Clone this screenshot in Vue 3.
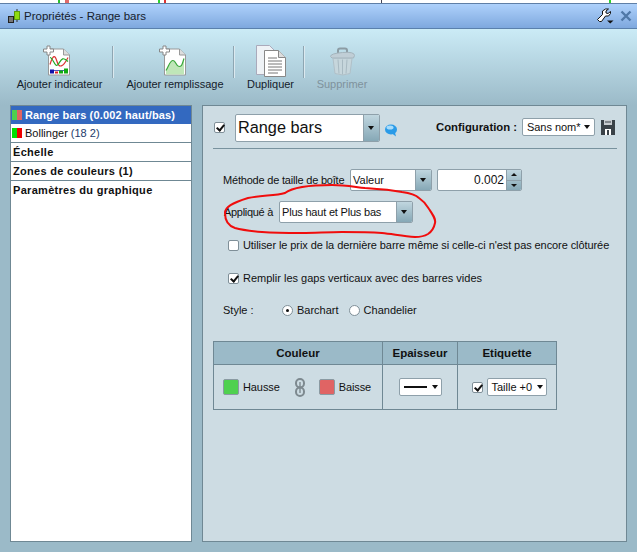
<script setup>
const items = [
  { name: 'add1', label: 'Ajouter indicateur', w: 85 },
  { name: 'add2', label: 'Ajouter remplissage', w: 96 },
  { name: 'dup', label: 'Dupliquer', w: 45 },
  { name: 'del', label: 'Supprimer', w: 48, off: true },
]
</script>

<template>
  <div class="page">
    <div class="topstrip">
      <i class="mark m1"></i><i class="mark m2"></i><i class="mark m3"></i><i class="mark m4"></i><i class="mark m5"></i><i class="mark m6"></i>
    </div>
    <header class="titlebar">
      <svg class="appicon" width="17" height="15" viewBox="0 0 17 15">
        <path d="M7 8v6M13 0v13" stroke="#333" fill="none"/>
        <rect x="4.500" y="7.500" width="5" height="6" fill="#777" stroke="#222"/>
        <rect x="10.500" y="2.500" width="5" height="8" fill="#8fdc10" stroke="#5a9a10"/>
      </svg>
      <span class="title">Propriétés - Range bars</span>
      <svg class="wrench" width="18" height="16" viewBox="0 0 18 16">
        <path d="M3.500 13.500 L1.500 11.500 L6.500 6.500 L6.500 3 L9.500 1 L12.500 1 L10 3 L10 5 L12 5.500 L14.500 3.500 L14.500 5.500 L12.500 8 L9.500 8 L5.500 13.500 Z" fill="#fff" stroke="#111"/>
        <path d="M11 12.500h6.500l-3.250 3z" fill="#111"/>
      </svg>
      <svg class="close" width="12" height="12" viewBox="0 0 12 12">
        <path d="M1.500 1.500l9 9M10.500 1.500l-9 9" stroke="#4f78a8" stroke-width="2.400"/>
      </svg>
    </header>

    <nav class="toolbar">
      <template v-for="(it, i) in items" :key="it.name">
        <span v-if="i" class="sep"></span>
        <button class="tool" :class="[it.name, { off: it.off }]" :style="{ width: it.w + 'px' }">
          <svg v-if="it.name === 'add1'" width="28" height="31" viewBox="0 0 28 31">
            <path d="M5.500 3.500h15l6 6v20h-21z" fill="#fff" stroke="#999"/>
            <path d="M20.500 3.500v6h6" fill="#ddd" stroke="#999"/>
            <path d="M7 19c3-10 5-10 7-3s6 6 11-4" fill="none" stroke="#d33" stroke-width="1.200"/>
            <path d="M7 12c3 0 5 11 8 7s4-9 10-3" fill="none" stroke="#2a2" stroke-width="1.200"/>
            <path d="M7 25h18" stroke="#55b"/>
            <path d="M7 24h4v4H7z" fill="#11a"/><path d="M12 26h3v2h-3z" fill="#d22"/><path d="M16 25h4v3h-4z" fill="#1a1"/><path d="M21 23h4v5h-4z" fill="#1a1"/>
            <path d="M4 .500h3v3h3.500v3H7v3H4v-3H.500v-3H4z" fill="#fff" stroke="#888"/>
          </svg>
          <svg v-else-if="it.name === 'add2'" width="28" height="31" viewBox="0 0 28 31">
            <path d="M5.500 3.500h15l6 6v20h-21z" fill="#fff" stroke="#999"/>
            <path d="M20.500 3.500v6h6" fill="#ddd" stroke="#999"/>
            <path d="M7 25c3-5 4-10 7-10s3 6 6 6 3-2 5-8v16H7z" fill="#bfe6b8"/>
            <path d="M7 25c3-5 4-10 7-10s3 6 6 6 3-2 5-8" fill="none" stroke="#3aa83a" stroke-width="1.200"/>
            <path d="M4 .500h3v3h3.500v3H7v3H4v-3H.500v-3H4z" fill="#fff" stroke="#888"/>
          </svg>
          <svg v-else-if="it.name === 'dup'" width="30" height="32" viewBox="0 0 30 32">
            <path d="M.500.500h13l6 6v23H.500z" fill="#eef2f6" stroke="#aab"/>
            <path d="M8.500 5.500h14l7 7v19h-21z" fill="#fff" stroke="#888"/>
            <path d="M22.500 5.500v7h7" fill="#ddd" stroke="#888"/>
            <path d="M12 13h9M12 16h14M12 19h14M12 22h14M12 25h14M12 28h10" stroke="#777"/>
          </svg>
          <svg v-else width="25" height="29" viewBox="0 0 25 29">
            <path d="M8 6V3q0-2 2-2h5q2 0 2 2v3" fill="none" stroke="#8c9ca4" stroke-width="2"/>
            <path d="M.500 9q0-3 12-4t12 3l-1 2.500H2z" fill="#c0ced6" stroke="#a4b4bc"/>
            <path d="M3 11h19l-2 15q-7 3-15 0z" fill="#c6d6dc" stroke="#b0c0c8"/>
            <path d="M8 12l1 14M12.500 12v15M17 12l-1 14" stroke="#a8bac2"/>
          </svg>
          <span class="toollabel">{{ it.label }}</span>
        </button>
      </template>
    </nav>

    <main class="body">
      <aside class="tree">
        <div class="row sel"><i class="sw"><b class="g2"></b><b class="r2"></b></i>Range bars (0.002 haut/bas)</div>
        <div class="row ind"><i class="sw"><b class="g1"></b><b class="r1"></b></i>Bollinger <span class="param">(18 2)</span></div>
        <div class="row bold">Échelle</div>
        <div class="row bold">Zones de couleurs (1)</div>
        <div class="row bold last">Paramètres du graphique</div>
      </aside>

      <section class="panel">
        <div class="head">
          <span class="check on cb-head"></span>
          <div class="combo big"><span class="val">Range bars</span><span class="drop"></span></div>
          <svg class="bubble" width="14" height="13" viewBox="0 0 14 13">
            <ellipse cx="7" cy="5.500" rx="6" ry="5" fill="#2a9be8"/>
            <ellipse cx="6" cy="3.500" rx="3.500" ry="2" fill="#a8dcfa"/>
            <path d="M8 9.500l4 3-1-4z" fill="#2a9be8"/>
          </svg>
          <span class="spacer"></span>
          <span class="cfg">Configuration :</span>
          <div class="pill cfgsel">Sans nom*<i class="tri"></i></div>
          <svg class="save" width="14" height="15" viewBox="0 0 14 15">
            <path d="M0 0h14v15H0z" fill="#3a4248"/>
            <path d="M3 0h8v5H3z" fill="#c8ccd0"/><path d="M4 2h6" stroke="#3a4248"/>
            <path d="M4 9h6v6H4z" fill="#fff"/><path d="M6 10h2v5H6z" fill="#3a4248"/>
          </svg>
        </div>
        <hr class="rule" />

        <div class="line method">
          <span class="lab lab-m">Méthode de taille de boîte</span>
          <div class="combo c-val"><span class="val">Valeur</span><span class="drop"></span></div>
          <div class="spin"><span class="num">0.002</span><span class="arrows"><i class="up"></i><i class="down"></i></span></div>
        </div>
        <div class="line applied">
          <span class="lab lab-a">Appliqué à</span>
          <div class="combo c-app"><span class="val">Plus haut et Plus bas</span><span class="drop"></span></div>
        </div>
        <label class="line opt o1"><span class="check"></span>Utiliser le prix de la dernière barre même si celle-ci n'est pas encore clôturée</label>
        <label class="line opt o2"><span class="check on"></span>Remplir les gaps verticaux avec des barres vides</label>
        <div class="line style">
          <span class="stylelab">Style :</span>
          <span class="radio on"></span><span class="rlab">Barchart</span>
          <span class="radio r2nd"></span><span class="rlab">Chandelier</span>
        </div>

        <div class="grid">
          <div class="th">Couleur</div><div class="th">Epaisseur</div><div class="th">Etiquette</div>
          <div class="td colors">
            <span class="swatch green"></span><span class="clab">Hausse</span>
            <svg class="link" width="10" height="19" viewBox="0 0 10 19">
              <rect x="1" y="1" width="8" height="8.500" rx="4" fill="none" stroke="#7d898f" stroke-width="2"/>
              <rect x="1" y="9.500" width="8" height="8.500" rx="4" fill="none" stroke="#7d898f" stroke-width="2"/>
              <path d="M5 4v11" stroke="#7d898f" stroke-width="1.400"/>
            </svg>
            <span class="swatch red"></span><span class="clab">Baisse</span>
          </div>
          <div class="td center"><div class="pill thick"><i class="stroke"></i><i class="tri"></i></div></div>
          <div class="td center group"><span class="check on"></span><div class="pill size">Taille +0<i class="tri"></i></div></div>
        </div>
      </section>
    </main>

    <svg class="scribble" width="637" height="552" viewBox="0 0 637 552">
      <path d="M225 213C225 207 232 203 248 198C262 195 275 196 285 193C293 187 312 185 332 185C345 185 355 187 365 188C380 189 392 190 402 192C410 193 416 195 419 198C425 202 427 206 429 209C433 215 436 219 435 223C434 228 431 232 428 234C423 237 419 237 415 237C403 236 392 234 382 233C368 232 355 232 342 232C328 232 315 233 302 233C288 233 275 233 262 232C250 231 242 230 235 228C229 226 225 222 225 213Z" fill="none" stroke="#f00d0d" stroke-width="2"/>
    </svg>
  </div>
</template>

<style>
html, body { margin: 0; padding: 0; background: #fff; overflow: hidden; }
</style>

<style scoped>
.page { position: relative; width: 637px; height: 552px; overflow: hidden; background: #9bbac8; font: 11px "Liberation Sans", Arial, sans-serif; color: #111; display: flex; flex-direction: column; }
.topstrip { position: relative; height: 3px; background: #fff; border-bottom: 1px solid #5f7fa6; flex: none; }
.mark { position: absolute; top: 0; height: 3px; display: block; }
.m1 { left: 58px; width: 2px; background: #2cc02c; }
.m2 { left: 65px; width: 4px; background: #e06a6a; }
.m3 { left: 158px; width: 2px; background: #2ed42e; }
.m4 { left: 164px; width: 2px; background: #d33; }
.m5 { left: 381px; width: 1px; background: #445; }
.m6 { left: 609px; width: 2px; background: #2ed42e; }
.titlebar { height: 24px; flex: none; display: flex; align-items: center; padding: 0 5px 0 4px; background: linear-gradient(#aed1fb, #7ea8de); border-bottom: 1px solid #5a80ac; }
.appicon { margin-top: 1px; }
.title { margin-left: 3px; font-size: 11.500px; color: #16202c; flex: 1; }
.wrench { margin-right: 6px; }
.toolbar { height: 76px; flex: none; display: flex; align-items: flex-start; padding: 16px 0 0 17px; background: linear-gradient(#cbebf6, #9bbac8); box-sizing: border-box; }
.tool { all: unset; display: flex; flex-direction: column; align-items: center; color: #14202a; }
.tool svg { height: 32px; flex: none; }
.add1 svg { margin-right: 6px; }
.add2 svg { margin-right: 5px; }
.del svg { margin-top: 2px; height: 30px; }
.toollabel { margin-top: 1px; white-space: nowrap; font-size: 11px; line-height: 13px; }
.del .toollabel { margin-top: 1px; }
.tool.off { color: #7f929c; }
.sep { width: 1px; height: 32px; margin: 1px 14px 0 10px; background: #8ea6b2; box-shadow: 1px 0 0 #dbe9ef; flex: none; }
.body { flex: 1; display: flex; gap: 10px; padding: 0 10px 10px 10px; min-height: 0; }
.tree { width: 182px; box-sizing: border-box; background: #fff; border: 1px solid #6f8894; flex: none; font-size: 11px; }
.row { height: 18px; line-height: 17px; border-bottom: 1px solid #6f8894; padding-left: 2px; display: flex; align-items: center; white-space: nowrap; }
.row.bold { font-weight: bold; letter-spacing: .3px; }
.row.last { border-bottom: 0; }
.row.sel { background: #3369c0; color: #fff; font-weight: bold; border-bottom: 0; letter-spacing: .15px; padding-left: 1px; }
.row.ind { padding-left: 1px; }
.param { color: #223a6a; margin-left: 3px; }
.sw { display: flex; width: 10px; height: 10px; margin-right: 3px; flex: none; }
.sw b { flex: 1; display: block; }
.g1 { background: #00e000; } .r1 { background: #ee0000; }
.g2 { background: #4fd04f; } .r2 { background: #e06464; }
.panel { flex: 1; background: #cddce3; border: 1px solid #6f8894; box-sizing: border-box; display: flex; flex-direction: column; padding: 0 9px 0 10px; }
.head { height: 42px; display: flex; align-items: center; flex: none; }
.spacer { flex: 1; }
.check { display: inline-block; position: relative; box-sizing: border-box; width: 11px; height: 11px; background: #fff; border: 1px solid #7f8f98; border-radius: 2px; flex: none; }
.check.on::after { content: ""; position: absolute; left: 3px; top: 0; width: 3px; height: 6px; border: solid #111; border-width: 0 2px 2px 0; transform: rotate(40deg); }
.cb-head { margin: 1px 10px 0 1px; }
.combo { position: relative; box-sizing: border-box; display: flex; background: #fff; border: 1px solid #8ea0aa; border-radius: 2px; align-items: center; overflow: hidden; }
.big { width: 145px; height: 28px; margin-top: 1px; font-size: 16.300px; }
.val { flex: 1; padding-left: 2px; white-space: nowrap; }
.drop { position: relative; align-self: stretch; width: 15px; flex: none; background: linear-gradient(#c0d6df, #86a8b6); border-left: 1px solid #8ea0aa; }
.drop::after { content: ""; position: absolute; left: 4px; top: 50%; margin-top: -2px; border: solid transparent; border-width: 4px 3.500px 0; border-top-color: #111; }
.tri { display: block; width: 0; height: 0; flex: none; border: solid transparent; border-width: 4px 3.500px 0; border-top-color: #111; }
.bubble { margin-left: 4px; margin-top: 6px; }
.cfg { font-weight: bold; font-size: 11.300px; margin-right: 5px; }
.pill { box-sizing: border-box; display: flex; align-items: center; background: #fff; border: 1px solid #8ea0aa; border-radius: 2px; }
.cfgsel { width: 73px; height: 18px; padding: 0 4px; justify-content: space-between; letter-spacing: -.05px; }
.save { margin-left: 6px; margin-right: 2px; }
.rule { margin: 0; border: 0; border-top: 1px solid #78929e; height: 0; flex: none; }
.line { display: flex; align-items: center; flex: none; }
.method { margin-top: 20px; height: 22px; margin-left: 10px; }
.lab { white-space: nowrap; }
.lab-m { letter-spacing: -.2px; width: 121px; }
.lab-a { letter-spacing: -.3px; width: 49px; }
.c-val { margin-left: 6px; width: 82px; height: 22px; }
.spin { margin-left: 5px; width: 85px; height: 22px; box-sizing: border-box; background: #fff; border: 1px solid #8ea0aa; border-radius: 2px; display: flex; overflow: hidden; }
.num { flex: 1; text-align: right; line-height: 20px; font-size: 12px; padding-right: 2px; }
.arrows { width: 14px; display: flex; flex-direction: column; border-left: 1px solid #8ea0aa; background: linear-gradient(#c0d6df, #86a8b6); }
.arrows i { flex: 1; position: relative; }
.up { border-bottom: 1px solid #8ea0aa; }
.up::after, .down::after { content: ""; position: absolute; left: 4px; top: 3px; border: solid transparent; border-width: 0 3px 3px; border-bottom-color: #111; }
.down::after { border-width: 3px 3px 0; border-top-color: #111; border-bottom-color: transparent; }
.applied { margin-top: 10px; height: 22px; margin-left: 11px; }
.c-app { margin-left: 6px; width: 134px; height: 22px; letter-spacing: -.2px; }
.opt { white-space: nowrap; }
.opt .check { margin-right: 4px; }
.o1 { margin: 14px 0 0 15px; height: 16px; letter-spacing: -.08px; }
.o2 { margin: 17px 0 0 15px; height: 16px; }
.style { margin: 16px 0 0 10px; height: 16px; }
.stylelab { width: 59px; margin-top: -1px; }
.radio { box-sizing: border-box; width: 11px; height: 11px; border-radius: 50%; background: #fff; border: 1px solid #7f8f98; position: relative; flex: none; margin-right: 4px; }
.radio.on::after { content: ""; position: absolute; left: 3px; top: 3px; width: 3px; height: 3px; border-radius: 50%; background: #111; }
.r2nd { margin-left: 10px; }
.grid { margin-top: 23px; width: 344px; display: grid; grid-template-columns: 169px 75px 99px; grid-template-rows: 23px 45px; box-sizing: border-box; border: 1px solid #6f8894; border-width: 1px 0 0 1px; flex: none; }
.th, .td { box-sizing: border-box; border: solid #6f8894; border-width: 0 1px 1px 0; display: flex; align-items: center; justify-content: center; }
.th { background: #9bbac8; font-weight: bold; font-size: 11.500px; }
.group { gap: 4px; padding-left: 4px; }
.colors { justify-content: flex-start; padding-left: 9px; }
.swatch { width: 16px; height: 16px; box-sizing: border-box; border: 1px solid #8a9aa2; border-radius: 2px; flex: none; }
.green { background: #4fd14f; } .red { background: #e06464; }
.clab { margin-left: 4px; letter-spacing: -.1px; }
.link { margin: 0 14px 0 15px; flex: none; }
.thick { width: 43px; height: 18px; padding: 0 3px 0 4px; justify-content: space-between; flex: none; }
.stroke { width: 23px; height: 2px; background: #111; display: block; }
.size { width: 60px; height: 18px; padding: 0 3px 0 4px; justify-content: space-between; flex: none; }
.scribble { position: absolute; left: 0; top: 0; pointer-events: none; }
</style>
